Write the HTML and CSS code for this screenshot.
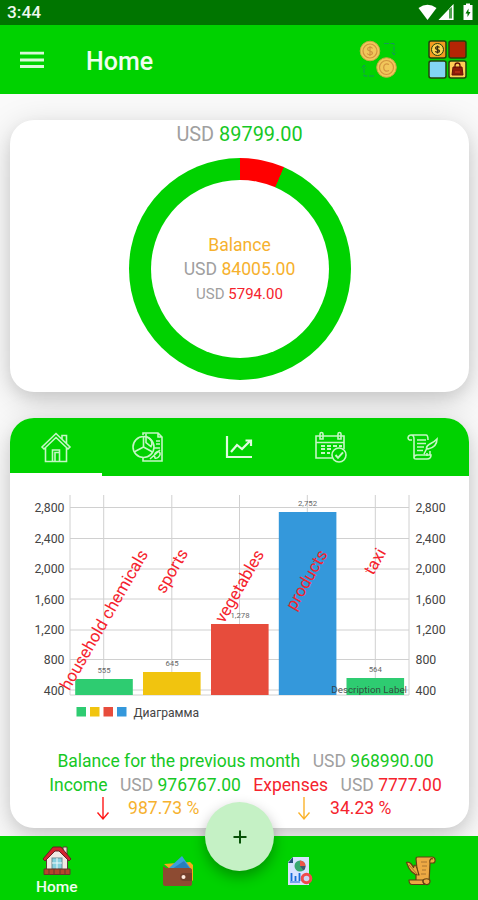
FILE: index.html
```html
<!DOCTYPE html>
<html lang="en">
<head>
    <meta charset="UTF-8">
    <meta name="viewport" content="width=device-width, initial-scale=1.0">
    <title>Home</title>
    <link rel="stylesheet" href="styles.css">
</head>
<body>
    <div class="status-bar">
        <span class="clock">3:44</span>
        <svg class="status-icons" width="56" height="18" viewBox="0 0 56 18">
            <path d="M.5 5Q9.500-1.500 18.500 5L9.500 17z" fill="#fff"/>
            <path d="M20.500 17H35.500V1z" fill="#4fa34f"/>
            <path d="M20.500 17H31V6zM35.500 1V17H31v-1.500h3V4L30 7z" fill="#fff"/>
            <path d="M45.500 2h2.500V.5h4V2h2.500v15h-9V2z" fill="#fff"/>
            <path d="M50.500 5.500L47.500 10.500h2v3.500l3-5H50.500z" fill="#007500"/>
        </svg>
    </div>

    <header class="app-bar">
        <svg class="menu-icon" width="24" height="18" viewBox="0 0 24 18">
            <path d="M0 2.200h24M0 9h24M0 15.500h24" stroke="#d9f8d9" stroke-width="2.800"/>
        </svg>
        <h1 class="title">Home</h1>
        <svg class="coins-icon" width="40" height="40" viewBox="0 0 40 40">
            <path d="M25 3.500h10v11M33 12l2 3 2-3M15 36H5V25M3 28l2-3 2 3" fill="none" stroke="#15945c" stroke-width="1" stroke-dasharray="5 1.500"/>
            <g fill="#f1c75b" stroke="#c7a744" stroke-width="1">
                <circle cx="11" cy="11" r="9.800"/>
                <circle cx="27.500" cy="27.500" r="9.800"/>
            </g>
            <g fill="none" stroke="#d3943f" stroke-width="1.200">
                <circle cx="11" cy="11" r="7"/>
                <circle cx="27.500" cy="27.500" r="7"/>
                <path d="M13.500 8.500c-1-2-5-1.500-5 .6 0 2.500 5 1.400 5 4 0 2-4.500 2.400-5.300.3M11 6v10M30 24.500c-3-1.500-5.300 0-5.300 3s2.300 4.500 5.300 3"/>
            </g>
        </svg>
        <svg class="grid-icon" width="39" height="39" viewBox="0 0 39 39">
            <g stroke="#24410b" stroke-width="1.500">
                <rect x="1" y="1" width="17" height="17" rx="2" fill="#f39a20"/>
                <rect x="21" y="1" width="17" height="17" rx="2" fill="#b42505"/>
                <rect x="1" y="21" width="17" height="17" rx="2" fill="#83d5f5"/>
                <rect x="21" y="21" width="17" height="17" rx="2" fill="#ffcc55"/>
                <circle cx="9.500" cy="9.500" r="6" fill="#ffd34f" stroke-width="1"/>
            </g>
            <path d="M11.500 7.500c-1-1.500-4-1-4 .6 0 2 4 1 4 3 0 1.600-3.500 1.700-4.200.2M9.500 5.500v8" fill="none" stroke="#3a3010" stroke-width="1.300"/>
            <path d="M25 27h9l1 8H24z" fill="#8d1b08" stroke="#641207"/>
            <path d="M27 28v-2.500a2.500 2.500 0 0 1 5 0V28" fill="none" stroke="#641207" stroke-width="1.300"/>
            <path d="M27 32h5" stroke="#d33a1b"/>
        </svg>
    </header>

    <main class="content">
        <section class="card summary">
            <p class="total"><span class="cur">USD</span> <span class="green">89799.00</span></p>
            <div class="donut">
                <div class="donut-hole">
                    <p class="orange">Balance</p>
                    <p><span class="cur">USD</span> <span class="orange">84005.00</span></p>
                    <p class="spent"><span class="cur">USD</span> <span class="red">5794.00</span></p>
                </div>
            </div>
        </section>

        <section class="card details">
            <nav class="tabs">
                <a class="tab active">
                    <svg width="32" height="32" viewBox="0 0 32 32">
                        <path d="M2 16L16 2.500 30 16l-2 2L16 6.500 4 18zM5.500 17v13.500h21V17M22 8V4.500h4.500v8M12.500 30.500V19h7v11.500M15 30V21.500h4"/>
                    </svg>
                </a>
                <a class="tab">
                    <svg width="32" height="32" viewBox="0 0 32 32">
                        <path d="M11 4V2h15l4 4v24H11v-3M26 2v4h4"/>
                        <circle cx="11.500" cy="16" r="10.500"/>
                        <path d="M11.500 5.500V16L2 21M11.500 16l9 5M14 2.500v9l5 4c2-3 1-8-5-10M24 10h4M24 13h4M22 17h6M23 27c-2-6 4-8 5-5s-3 6-5 5zM18 28l10-9"/>
                    </svg>
                </a>
                <a class="tab">
                    <svg class="bold" width="32" height="32" viewBox="0 0 32 32">
                        <path d="M4 5v21h25M8 21l6-7 5 4 8-8M22.500 9.500H28V15"/>
                    </svg>
                </a>
                <a class="tab">
                    <svg width="32" height="32" viewBox="0 0 32 32">
                        <path d="M17 27H1V5h28v13M1 11.500h28M5 8V3a1.500 1.500 0 0 1 3 0v5zM23 8V3a1.500 1.500 0 0 1 3 0v5z"/>
                        <path d="M6 15h4M12 15h4M18 15h4M24 15h3M6 18h4M12 18h4M6 22h4M12 22h3" stroke-width="2"/>
                        <circle cx="24" cy="24" r="7"/>
                        <path d="M20.500 24l2.500 2.800 5-5.500" stroke-width="2"/>
                    </svg>
                </a>
                <a class="tab">
                    <svg width="32" height="32" viewBox="0 0 32 32">
                        <path d="M5 9H2.500C0 8 1 4 4 4h15c2 0 2 3 2 5M4 4c3 0 3 2 3 4v19M20 22v3M7 27c0-2 1-3 3-3h14c0 3-2 4-4 4H9c-2 0-2-1-2-1M10 9h9M10 12.500h9M10 16h7M10 19.500h6M17 23l3-6M19.500 17c0-4 6-4 10.500-9 0 7-4 9-9 10zM23 20v4"/>
                    </svg>
                </a>
            </nav>

            <svg class="chart" width="459" height="273" viewBox="0 0 459 273">
                <g class="grid-lines">
                    <path d="M60 31.500H399M60 62.500H399M60 93H399M60 123H399M60 154H399M60 183.500H399M60 214H399"/>
                    <path d="M60 19V219H399V19M93.700 19V219M161.800 19V219M229.500 19V219M297.300 19V219M365.300 19V219"/>
                </g>
                <g class="bars">
                    <rect x="65.200" y="203" width="57.600" height="16" fill="#2ecc71"/>
                    <rect x="133" y="196" width="57.600" height="23" fill="#f1c40f"/>
                    <rect x="201" y="148" width="57.600" height="71" fill="#e74c3c"/>
                    <rect x="268.800" y="36" width="57.600" height="183" fill="#3498db"/>
                    <rect x="336.500" y="202" width="57.600" height="17" fill="#2ecc71"/>
                </g>
                <g class="bar-values">
                    <text x="94" y="197">555</text>
                    <text x="162" y="190">645</text>
                    <text x="230" y="142">1,278</text>
                    <text x="297.500" y="30">2,752</text>
                    <text x="365.300" y="196">564</text>
                </g>
                <g class="axis axis-left">
                    <text x="54.500" y="36">2,800</text>
                    <text x="54.500" y="66.500">2,400</text>
                    <text x="54.500" y="97">2,000</text>
                    <text x="54.500" y="127.500">1,600</text>
                    <text x="54.500" y="158">1,200</text>
                    <text x="54.500" y="188">800</text>
                    <text x="54.500" y="218.500">400</text>
                </g>
                <g class="axis">
                    <text x="405.500" y="36">2,800</text>
                    <text x="405.500" y="66.500">2,400</text>
                    <text x="405.500" y="97">2,000</text>
                    <text x="405.500" y="127.500">1,600</text>
                    <text x="405.500" y="158">1,200</text>
                    <text x="405.500" y="188">800</text>
                    <text x="405.500" y="218.500">400</text>
                </g>
                <g class="categories">
                    <text transform="translate(138.500 78) rotate(-60)">household chemicals</text>
                    <text transform="translate(178.500 77) rotate(-60)">sports</text>
                    <text transform="translate(254.500 78) rotate(-60)">vegetables</text>
                    <text transform="translate(318 78) rotate(-60)">products</text>
                    <text transform="translate(376.500 76.500) rotate(-60)">taxi</text>
                </g>
                <text class="description" x="397" y="217">Description Label</text>
                <rect x="66.500" y="231" width="9.500" height="9.500" fill="#2ecc71"/>
                <rect x="80" y="231" width="9.500" height="9.500" fill="#f1c40f"/>
                <rect x="93.500" y="231" width="9.500" height="9.500" fill="#e74c3c"/>
                <rect x="107" y="231" width="9.500" height="9.500" fill="#3498db"/>
                <text class="legend" x="123.500" y="240.500">Диаграмма</text>
            </svg>

            <div class="stats">
                <p class="stat-row">
                    <span class="green">Balance for the previous month</span>
                    <span><span class="cur">USD</span> <span class="green">968990.00</span></span>
                </p>
                <p class="stat-row">
                    <span class="green">Income</span>
                    <span><span class="cur">USD</span> <span class="green">976767.00</span></span>
                    <span class="red">Expenses</span>
                    <span><span class="cur">USD</span> <span class="red">7777.00</span></span>
                </p>
                <div class="percents">
                    <p class="percent orange">
                        <svg width="14" height="24" viewBox="0 0 14 24"><path d="M7 0V22M1.500 15.500L7 22l5.500-6.500" fill="none" stroke="#ff1717" stroke-width="1.400"/></svg>
                        987.73 %
                    </p>
                    <p class="percent red">
                        <svg width="14" height="24" viewBox="0 0 14 24"><path d="M7 0V22M1.500 15.500L7 22l5.500-6.500" fill="none" stroke="#fbb32b" stroke-width="1.400"/></svg>
                        34.23 %
                    </p>
                </div>
            </div>
        </section>
    </main>

    <footer class="bottom-bar">
        <a class="nav-item">
            <svg width="30" height="30" viewBox="0 0 30 30">
                <path d="M4.500 13L15 4l10.500 9v15h-21z" fill="#f1e9e3" stroke="#5d3b35"/>
                <path d="M21 2h4v9l-4-4z" fill="#e9dcd7" stroke="#5d3b35"/>
                <path d="M1 14L11 2h8l10 12-2 2L17 6h-4L3 16z" fill="#d3232e" stroke="#672025"/>
                <rect x="10" y="13" width="10" height="11" fill="#85d1df" stroke="#6c8b93"/>
                <path d="M15 13v11M10 18h10" stroke="#eef8fa"/>
                <path d="M2 24h26v5.500H2z" fill="#b5442b" stroke="#67372b"/>
                <path d="M7 24v5M12 24v5M18 24v5M23 24v5" stroke="#67372b"/>
            </svg>
            <span>Home</span>
        </a>
        <a class="nav-item">
            <svg width="32" height="32" viewBox="0 0 32 32">
                <path d="M2 9l26-2 3 3v15l-4 5z" fill="#f6a81c"/>
                <path d="M7 13L20 1l9 13z" fill="#3aa0dc"/>
                <path d="M10 14l12-8 7 9z" fill="#287fbd"/>
                <path d="M1 11l3 2h24c1 0 2 1 2 2v14c0 1-1 2-2 2H3c-1 0-2-1-2-2z" fill="#8d4b32"/>
                <path d="M22 18h8v8h-8a4 4 0 0 1 0-8z" fill="#74402d"/>
                <circle cx="21.500" cy="22" r="2" fill="#ffe9dc"/>
            </svg>
        </a>
        <a class="nav-item">
            <svg width="28" height="30" viewBox="0 0 28 30">
                <path d="M7 1h16v28H2V6z" fill="#d7e2ff"/>
                <path d="M7 1v6H2z" fill="#234f7e"/>
                <circle cx="14" cy="10" r="5.500" fill="#38a871"/>
                <path d="M14 10V4.500a5.500 5.500 0 0 1 5.500 5.500z" fill="#ec5548"/>
                <path d="M14 10h5.500a5.500 5.500 0 0 1-2 4.500z" fill="#40566e"/>
                <path d="M5.500 17v8M9.500 20v5M13.500 17v8" stroke="#176bd8" stroke-width="1.800"/>
                <path d="M4 26h10" stroke="#176bd8"/>
                <circle cx="20.500" cy="22.500" r="4.300" fill="#cdd7f5" stroke="#ef4b4b" stroke-width="3"/>
            </svg>
        </a>
        <a class="nav-item">
            <svg width="32" height="30" viewBox="0 0 32 30">
                <g fill="#eda944" stroke="#634013" stroke-width="1.200" stroke-linejoin="round">
                    <path d="M11 3c0-1.500 1-2 2-2h14c4 0 4 6 1 6h-3l-1 20H11V18l1-5z"/>
                    <path d="M25 7c-1-3 1-5 3-4"/>
                    <path d="M4 24h14c0 2 0 4 2 4.500H7c-2 0-3-2-3-4.500z"/>
                    <path d="M18 25c0-3 7-3 7 0s-2 4-4 3.500-3-1.500-3-3.500z"/>
                    <path d="M14 19C8 19 4 14 1.500 6.500c3-2 6 3 7 5l1-2.500c2.500 0 3 6 4.500 10z"/>
                </g>
                <path d="M4 9l9 10M16 6h6M17 10h5M17 14h4M16 18h5" fill="none" stroke="#a9752f"/>
            </svg>
        </a>
        <button class="fab" aria-label="Add">
            <svg width="16" height="16" viewBox="0 0 16 16"><path d="M8 1.500v13M1.500 8h13" stroke="#075107" stroke-width="2"/></svg>
        </button>
    </footer>
</body>
</html>
```
FILE: styles.css
```css
* {
    margin: 0;
    padding: 0;
    box-sizing: border-box;
}

body {
    height: 900px;
    display: flex;
    flex-direction: column;
    overflow: hidden;
    background-color: #fafafa;
    font-family: Roboto, "Liberation Sans", sans-serif;
    font-size: 17.6px;
}

svg {
    display: block;
    flex-shrink: 0;
}

.status-bar {
    height: 25px;
    padding: 0 4px 2px 7px;
    display: flex;
    align-items: center;
    justify-content: space-between;
    background-color: #007500;
}

.clock {
    color: #eef8ee;
    font-size: 17.3px;
    font-weight: 500;
}

.app-bar {
    height: 69px;
    padding: 0 11px 0 20px;
    display: flex;
    align-items: center;
    background-color: #00d200;
}

.title {
    margin-left: 42px;
    margin-top: 4px;
    color: #f0fdf0;
    font-size: 25px;
    font-weight: 500;
}

.coins-icon {
    margin-left: auto;
}

.grid-icon {
    margin-left: 29px;
}

.content {
    flex: 1;
    padding: 26px 9px 8px 10px;
    display: flex;
    flex-direction: column;
    gap: 26px;
}

.card {
    background-color: #fff;
    border-radius: 24px;
    box-shadow: 0 6px 14px rgba(0, 0, 0, 0.08), 0 8px 34px rgba(0, 0, 0, 0.17);
}

.summary {
    height: 272px;
    display: flex;
    flex-direction: column;
    align-items: center;
}

.total {
    height: 38px;
    line-height: 29px;
    font-size: 19.9px;
}

.donut {
    width: 222px;
    height: 222px;
    padding: 22px;
    border-radius: 50%;
    background: conic-gradient(#f00 23.2deg, #00d200 23.4deg);
}

.donut-hole {
    width: 178px;
    height: 178px;
    padding-top: 53px;
    border-radius: 50%;
    background-color: #fff;
    text-align: center;
    line-height: 24px;
}

.spent {
    margin-top: 1px;
    font-size: 15px;
}

.cur {
    color: #a0a0a0;
}

.green {
    color: #16c825;
}

.orange {
    color: #f6b12e;
}

.red {
    color: #f5232d;
}

.details {
    height: 410px;
    overflow: hidden;
}

.tabs {
    height: 58px;
    display: flex;
    background-color: #00d200;
}

.tab {
    flex: 1;
    display: flex;
    align-items: center;
    justify-content: center;
    border-bottom: 3px solid transparent;
}

.tab.active {
    border-color: #fff;
}

.tab svg {
    margin-top: 3px;
    fill: none;
    stroke: #c4f7c4;
    stroke-width: 1.6;
}

.tab .bold {
    stroke: #e0fbe0;
    stroke-width: 2.2;
}

.grid-lines {
    fill: none;
    stroke: #d0d0d0;
    stroke-width: 1;
}

.bar-values {
    fill: #666;
    font-size: 7.8px;
    text-anchor: middle;
}

.axis {
    fill: #444;
    font-size: 12.3px;
}

.axis-left {
    text-anchor: end;
}

.categories {
    fill: #f5232d;
    font-size: 16.8px;
    text-anchor: end;
}

.description {
    fill: #333;
    fill-opacity: 0.85;
    font-size: 9.8px;
    text-anchor: end;
}

.legend {
    fill: #444;
    font-size: 12.1px;
}

.stats {
    padding-left: 12px;
    line-height: 24px;
}

.stat-row {
    display: flex;
    justify-content: center;
    gap: 12.5px;
    font-size: 17.5px;
}

.percents {
    display: flex;
    padding-left: 74px;
}

.percent {
    display: flex;
    gap: 18px;
    line-height: 23px;
    white-space: nowrap;
}

.percent.orange {
    width: 201px;
}

.percent.red {
    gap: 19px;
}

.bottom-bar {
    position: relative;
    height: 64px;
    display: grid;
    grid-template-columns: repeat(4, 121.5px);
    justify-content: center;
    background-color: #00d200;
}

.nav-item {
    display: flex;
    flex-direction: column;
    align-items: center;
    justify-content: center;
    padding-top: 5px;
    color: #f0fdf0;
    font-size: 15.5px;
    line-height: 20px;
}

.nav-item span {
    margin-top: 2px;
    font-weight: 500;
}

.fab {
    position: absolute;
    left: 205px;
    top: -34px;
    width: 69px;
    height: 69px;
    display: flex;
    align-items: center;
    justify-content: center;
    border: none;
    border-radius: 50%;
    background-color: #c5f1c5;
    box-shadow: 0 6px 14px rgba(0, 0, 0, 0.3);
}
```
